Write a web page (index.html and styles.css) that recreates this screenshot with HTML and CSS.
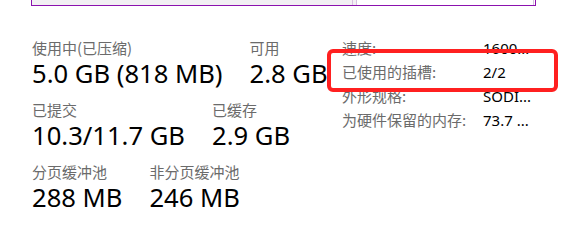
FILE: index.html
```html
<!DOCTYPE html>
<html>
<head>
<meta charset="utf-8">
<link rel="stylesheet" href="styles.css">
</head>
<body>

<div class="bar">
  <div class="bar-used"></div>
  <div class="bar-mod"></div>
  <div class="bar-free"></div>
</div>

<div class="main">
  <div class="stats">
    <div class="row">
      <div class="stat">
        <div class="label">使用中(已压缩)</div>
        <div class="value">5.0 GB (818 MB)</div>
      </div>
      <div class="stat">
        <div class="label">可用</div>
        <div class="value">2.8 GB</div>
      </div>
    </div>
    <div class="row">
      <div class="stat">
        <div class="label">已提交</div>
        <div class="value">10.3/11.7 GB</div>
      </div>
      <div class="stat">
        <div class="label">已缓存</div>
        <div class="value">2.9 GB</div>
      </div>
    </div>
    <div class="row">
      <div class="stat">
        <div class="label">分页缓冲池</div>
        <div class="value">288 MB</div>
      </div>
      <div class="stat">
        <div class="label">非分页缓冲池</div>
        <div class="value">246 MB</div>
      </div>
    </div>
  </div>

  <div class="props">
    <div class="prop-name">速度:</div><div class="prop-val">1600...</div>
    <div class="prop-name">已使用的插槽:</div><div class="prop-val">2/2</div>
    <div class="prop-name">外形规格:</div><div class="prop-val">SODI...</div>
    <div class="prop-name">为硬件保留的内存:</div><div class="prop-val">73.7 ...</div>
  </div>
</div>

<div class="highlight"></div>

</body>
</html>
```

FILE: styles.css
```css
body {
  margin: 0;
  background: #fff;
  font-family: "Noto Sans CJK SC", sans-serif;
  position: relative;
  width: 564px;
  height: 241px;
  overflow: hidden;
}

/* memory composition bar, cut off at the top */
.bar {
  display: flex;
  margin-left: 31px;
  width: 503px;
  height: 5px;
  border: 1px solid #8b12ae;
  border-top: none;
}
.bar-used {
  width: 320px;
  background: #f2f0f3;
}
.bar-mod {
  width: 3px;
  background: #f2f0f3;
  border-left: 1px solid #d7bfe0;
  border-right: 1px solid #d7bfe0;
}
.bar-free {
  flex: 1;
  background: #fff;
  border-right: 1px solid #d7bfe0;
  margin-right: 1px;
}

.main {
  display: flex;
  margin-top: 31px;
  padding-left: 32px;
}

.stats {
  width: 310px;
}
.row {
  display: flex;
  gap: 27px;
  margin-bottom: 10px;
}

.label {
  font-size: 15px;
  line-height: 22px;
  color: #6b6b6b;
}
.value {
  font-family: "Noto Sans", "Noto Sans CJK SC", sans-serif;
  font-size: 25.6px;
  line-height: 30px;
  color: #000;
  white-space: nowrap;
}

.props {
  display: grid;
  grid-template-columns: 141px 48px;
  grid-auto-rows: 24px;
  margin-top: -1px;
}
.prop-name {
  font-size: 15px;
  line-height: 24px;
  color: #6b6b6b;
  white-space: nowrap;
}
.prop-val {
  font-family: "Noto Sans", "Noto Sans CJK SC", sans-serif;
  font-size: 15px;
  line-height: 24px;
  color: #000;
  white-space: nowrap;
  overflow: hidden;
}

/* red annotation box drawn over the screenshot */
.highlight {
  position: absolute;
  left: 327px;
  top: 49px;
  width: 231px;
  height: 43px;
  box-sizing: border-box;
  border: 4px solid #ff2020;
  border-radius: 6px;
}
```
